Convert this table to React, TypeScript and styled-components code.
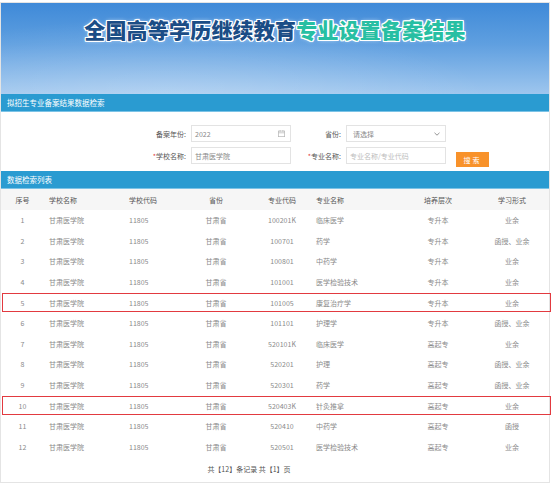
import React from "react";
import styled, { createGlobalStyle } from "styled-components";

const Global = createGlobalStyle`
  html, body { margin: 0; padding: 0; background: #fff; }
  body { padding-top: 2px; font-family: "Noto Sans CJK SC", "Noto Sans", sans-serif; }
  * { box-sizing: border-box; }
`;

const Frame = styled.div`
  width: 550px;
  height: 481px;
  border: 1px solid #e4e4e4;
  display: flex;
  flex-direction: column;
  overflow: visible;
`;

const Banner = styled.div`
  height: 91px;
  background:
    radial-gradient(ellipse at 30% 110%, rgba(255,255,255,0.25), rgba(255,255,255,0) 60%),
    linear-gradient(180deg, #3f8ad8 0%, #5f9fe0 45%, #9ec6ee 100%);
  padding-top: 14px;
  text-align: center;
`;

const Title = styled.h1<{ $tone?: "dark" | "teal" }>`
  margin: 0;
  font-size: 21px;
  line-height: 24px;
  font-weight: 900;
  letter-spacing: 0.2px;
  font-family: "Noto Sans CJK SC", sans-serif;
`;

const TitlePart = styled.span<{ $tone: "dark" | "teal" }>`
  color: ${(p) => (p.$tone === "dark" ? "#1b4d86" : "#27bfa3")};
  text-shadow:
    1px 1px 0 #fff, -1px -1px 0 #fff, 1px -1px 0 #fff, -1px 1px 0 #fff,
    0 1px 0 #fff, 0 -1px 0 #fff, 1px 0 0 #fff, -1px 0 0 #fff,
    0 0 4px rgba(255, 255, 255, 0.7);
`;

const SectionBar = styled.div`
  height: 18px;
  background: #2a9bd1;
  color: #fff;
  font-size: 7.5px;
  line-height: 18px;
  padding-left: 6px;
  border-bottom: 1px solid #7cc3e6;
`;

const Form = styled.div`
  height: 59px;
  padding-top: 13px;
  display: grid;
  grid-template-columns: 190px 100px 55px 100px auto;
  grid-auto-rows: 17px;
  row-gap: 5px;
  align-items: center;
`;

const Label = styled.div`
  text-align: right;
  padding-right: 5px;
  font-size: 7px;
  color: #555;
`;

const Star = styled.span`
  color: #e23a40;
`;

const Field = styled.div<{ $placeholder?: boolean }>`
  height: 17px;
  border: 1px solid #e3e3e3;
  background: #fff;
  display: flex;
  align-items: center;
  justify-content: space-between;
  padding: 0 5px 0 3px;
  font-size: 7px;
  color: ${(p) => (p.$placeholder ? "#bdbdbd" : "#888")};
`;

const SearchButton = styled.button`
  margin-left: 10px;
  width: 33px;
  height: 15px;
  border: none;
  background: #f8922a;
  color: #fff;
  font-size: 7px;
  font-family: "Noto Sans CJK SC", sans-serif;
  padding: 0;
  letter-spacing: 2px;
  cursor: pointer;
`;

const COLS = "43px 80px 57px 70px 62px 88px 74px 74px";

const HeadRow = styled.div`
  display: grid;
  grid-template-columns: ${COLS};
  height: 21px;
  align-items: center;
  background: #f6f6f6;
  color: #555;
  font-size: 7px;
`;

const Row = styled.div<{ $marked?: boolean }>`
  position: relative;
  display: grid;
  grid-template-columns: ${COLS};
  height: 20.6px;
  align-items: center;
  color: #8a8a8a;
  font-size: 7px;
  &::after {
    content: "";
    display: ${(p) => (p.$marked ? "block" : "none")};
    position: absolute;
    left: 1px;
    right: -2px;
    top: 1px;
    bottom: 1px;
    border: 1.5px solid #e23a40;
    pointer-events: none;
  }
`;

const Cell = styled.div<{ $align: "left" | "center"; $pad?: number }>`
  text-align: ${(p) => p.$align};
  padding-left: ${(p) => p.$pad ?? 0}px;
  white-space: nowrap;
`;

const Pager = styled.div`
  flex: 1;
  display: flex;
  align-items: center;
  justify-content: center;
  padding-right: 52px;
  padding-bottom: 1px;
  font-size: 7px;
  color: #555;
`;

const colDefs: { align: "left" | "center"; pad?: number }[] = [
  { align: "center" },
  { align: "left", pad: 5 },
  { align: "left", pad: 5 },
  { align: "center" },
  { align: "center" },
  { align: "left", pad: 3 },
  { align: "center" },
  { align: "center", pad: 0 },
];

const headers = ["序号", "学校名称", "学校代码", "省份", "专业代码", "专业名称", "培养层次", "学习形式"];

const data: [string, string, string, string][] = [
  ["100201K", "临床医学", "专升本", "业余"],
  ["100701", "药学", "专升本", "函授、业余"],
  ["100801", "中药学", "专升本", "业余"],
  ["101001", "医学检验技术", "专升本", "业余"],
  ["101005", "康复治疗学", "专升本", "业余"],
  ["101101", "护理学", "专升本", "函授、业余"],
  ["520101K", "临床医学", "高起专", "业余"],
  ["520201", "护理", "高起专", "函授、业余"],
  ["520301", "药学", "高起专", "函授、业余"],
  ["520403K", "针灸推拿", "高起专", "业余"],
  ["520410", "中药学", "高起专", "函授"],
  ["520501", "医学检验技术", "高起专", "业余"],
];

const marked = new Set([5, 10]);

const CalendarIcon = () => (
  <svg width="7" height="7" viewBox="0 0 10 10" fill="none" stroke="#b5b5b5" strokeWidth="1">
    <rect x="0.5" y="1.5" width="9" height="8" />
    <line x1="0.5" y1="4" x2="9.5" y2="4" />
    <line x1="3" y1="0" x2="3" y2="2.5" />
    <line x1="7" y1="0" x2="7" y2="2.5" />
  </svg>
);

const Chevron = () => (
  <svg width="6" height="4" viewBox="0 0 6 4" fill="none" stroke="#888" strokeWidth="0.9">
    <polyline points="0.5,0.8 3,3.2 5.5,0.8" />
  </svg>
);

export default function App() {
  return (
    <>
      <Global />
      <Frame>
        <Banner>
          <Title>
            <TitlePart $tone="dark">全国高等学历继续教育</TitlePart>
            <TitlePart $tone="teal">专业设置备案结果</TitlePart>
          </Title>
        </Banner>
        <SectionBar>拟招生专业备案结果数据检索</SectionBar>
        <Form>
          <Label>备案年份:</Label>
          <Field>
            <span>2022</span>
            <CalendarIcon />
          </Field>
          <Label>省份:</Label>
          <Field>
            <span style={{ paddingLeft: 3 }}>请选择</span>
            <Chevron />
          </Field>
          <div />
          <Label>
            <Star>*</Star>学校名称:
          </Label>
          <Field>
            <span>甘肃医学院</span>
          </Field>
          <Label>
            <Star>*</Star>专业名称:
          </Label>
          <Field $placeholder>
            <span>专业名称/专业代码</span>
          </Field>
          <div>
            <SearchButton>搜索</SearchButton>
          </div>
        </Form>
        <SectionBar>数据检索列表</SectionBar>
        <HeadRow>
          {headers.map((h, i) => (
            <Cell key={h} $align={colDefs[i].align} $pad={colDefs[i].pad}>
              {h}
            </Cell>
          ))}
        </HeadRow>
        {data.map((d, idx) => {
          const n = idx + 1;
          const cells = [String(n), "甘肃医学院", "11805", "甘肃省", d[0], d[1], d[2], d[3]];
          return (
            <Row key={n} $marked={marked.has(n)}>
              {cells.map((c, i) => (
                <Cell key={i} $align={colDefs[i].align} $pad={colDefs[i].pad}>
                  {c}
                </Cell>
              ))}
            </Row>
          );
        })}
        <Pager>共【12】条记录 共【1】页</Pager>
      </Frame>
    </>
  );
}
